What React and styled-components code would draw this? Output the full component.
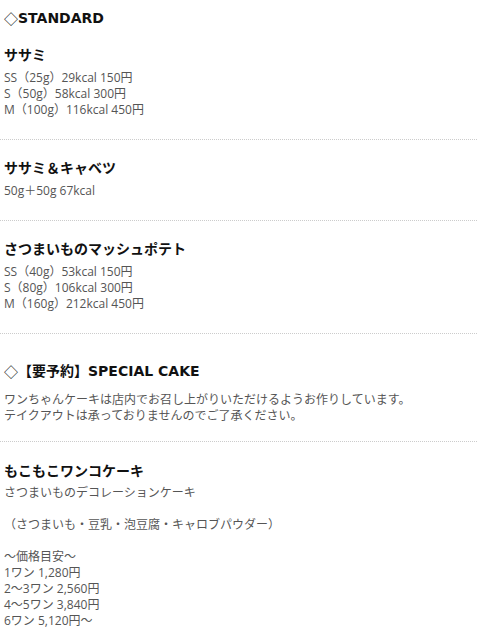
import styled, { createGlobalStyle } from "styled-components";

const GlobalStyle = createGlobalStyle`
body{
    margin: 0;
    background: #fff;
    font-family: "Open Sans", "Noto Sans CJK JP", sans-serif;
}
`

const standard = [
    {
        name: "ササミ",
        lines: ["SS（25g）29kcal 150円", "S（50g）58kcal 300円", "M（100g）116kcal 450円"],
    },
    {
        name: "ササミ＆キャベツ",
        lines: ["50g＋50g 67kcal"],
    },
    {
        name: "さつまいものマッシュポテト",
        lines: ["SS（40g）53kcal 150円", "S（80g）106kcal 300円", "M（160g）212kcal 450円"],
    },
]

const cakeLines = [
    "さつまいものデコレーションケーキ",
    "",
    "（さつまいも・豆乳・泡豆腐・キャロブパウダー）",
    "",
    "〜価格目安〜",
    "1ワン 1,280円",
    "2〜3ワン 2,560円",
    "4〜5ワン 3,840円",
    "6ワン 5,120円〜",
]

const Menu = () => {
    return(
        <Page>
            <GlobalStyle />

            <SectionTitle $top={8}><Mark>◇</Mark>STANDARD</SectionTitle>
            {standard.map((item, i) => (
                <Item key={item.name} $top={i === 0 ? 17 : 18}>
                    <ItemName>{item.name}</ItemName>
                    <Text>
                        {item.lines.map((l) => <Line key={l}>{l}</Line>)}
                    </Text>
                </Item>
            ))}

            <SectionTitle $top={27}><Mark>◇</Mark>【要予約】SPECIAL CAKE</SectionTitle>
            <Note>
                <Line>ワンちゃんケーキは店内でお召し上がりいただけるようお作りしています。</Line>
                <Line>テイクアウトは承っておりませんのでご了承ください。</Line>
            </Note>

            <Item $top={19} $gap={4}>
                <ItemName>もこもこワンコケーキ</ItemName>
                <Text>
                    {cakeLines.map((l, i) => <Line key={i}>{l || "\u00a0"}</Line>)}
                </Text>
            </Item>
        </Page>
    )
}

export default Menu;


const Page = styled.div`
width: 477px;
min-height: 639px;
display: flex;
flex-direction: column;
`

const SectionTitle = styled.h2`
margin: 0;
height: 20px;
display: flex;
align-items: center;
white-space: pre;
padding: ${(p) => p.$top}px 4px 0;
font-family: "DejaVu Sans", "Noto Sans CJK JP", sans-serif;
font-size: 14px;
line-height: 20px;
font-weight: 700;
color: #111;
`

const Mark = styled.span`
font-family: "Noto Sans CJK JP", sans-serif;
font-weight: 400;
`

const Item = styled.div`
display: flex;
flex-direction: column;
gap: ${(p) => (p.$gap != null ? p.$gap : 5)}px;
padding: ${(p) => p.$top}px 4px 21px;
border-bottom: 1px dotted #ccc;
&:last-child{
    border-bottom: none;
}
`

const ItemName = styled.h3`
margin: 0;
font-size: 14px;
line-height: 20px;
font-weight: 700;
color: #111;
`

const Text = styled.div`
font-size: 12px;
line-height: 16px;
color: #555;
`

const Note = styled(Text)`
padding: 11px 4px 17px;
border-bottom: 1px dotted #ccc;
`

const Line = styled.div`
white-space: nowrap;
`
